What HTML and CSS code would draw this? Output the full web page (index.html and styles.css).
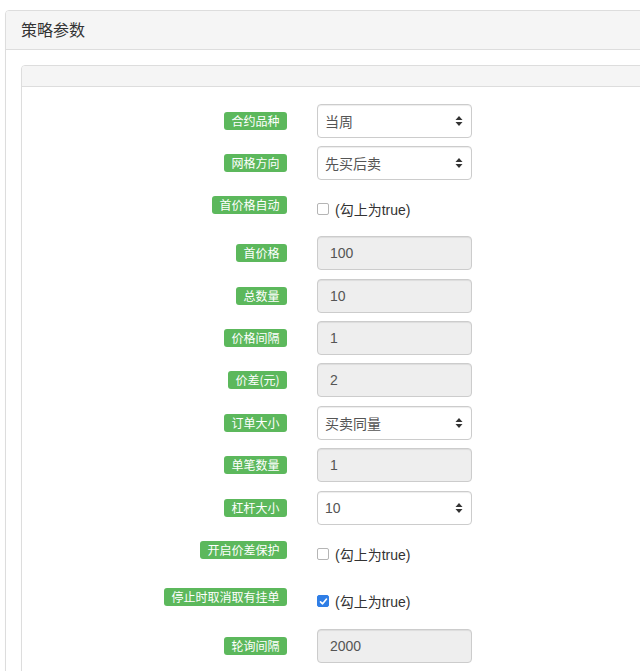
FILE: index.html
```html
<!DOCTYPE html>
<html lang="zh-CN">
<head>
<meta charset="utf-8">
<title>策略参数</title>
<link rel="stylesheet" href="styles.css">
</head>
<body>
<div class="panel outer">
  <div class="panel-heading"><h3 class="panel-title">策略参数</h3></div>
  <div class="panel-body">
    <div class="panel inner">
      <div class="panel-heading empty"></div>
      <div class="form">
        <div class="row"><span class="lbl">合约品种</span>
          <div class="ctl select"><span>当周</span><svg class="caret" width="8" height="12" viewBox="0 0 8 12"><path d="M4 1 L7.5 5 H0.5 Z M4 11 L7.5 7 H0.5 Z" fill="#333"/></svg></div></div>
        <div class="row"><span class="lbl">网格方向</span>
          <div class="ctl select"><span>先买后卖</span><svg class="caret" width="8" height="12" viewBox="0 0 8 12"><path d="M4 1 L7.5 5 H0.5 Z M4 11 L7.5 7 H0.5 Z" fill="#333"/></svg></div></div>
        <div class="row chk"><span class="lbl">首价格自动</span>
          <label class="check"><span class="box"></span><span>(勾上为true)</span></label></div>
        <div class="row"><span class="lbl">首价格</span><div class="ctl ro">100</div></div>
        <div class="row"><span class="lbl">总数量</span><div class="ctl ro">10</div></div>
        <div class="row"><span class="lbl">价格间隔</span><div class="ctl ro">1</div></div>
        <div class="row"><span class="lbl">价差(元)</span><div class="ctl ro">2</div></div>
        <div class="row"><span class="lbl">订单大小</span>
          <div class="ctl select"><span>买卖同量</span><svg class="caret" width="8" height="12" viewBox="0 0 8 12"><path d="M4 1 L7.5 5 H0.5 Z M4 11 L7.5 7 H0.5 Z" fill="#333"/></svg></div></div>
        <div class="row"><span class="lbl">单笔数量</span><div class="ctl ro">1</div></div>
        <div class="row"><span class="lbl">杠杆大小</span>
          <div class="ctl select"><span>10</span><svg class="caret" width="8" height="12" viewBox="0 0 8 12"><path d="M4 1 L7.5 5 H0.5 Z M4 11 L7.5 7 H0.5 Z" fill="#333"/></svg></div></div>
        <div class="row chk"><span class="lbl">开启价差保护</span>
          <label class="check"><span class="box"></span><span>(勾上为true)</span></label></div>
        <div class="row chk"><span class="lbl">停止时取消取有挂单</span>
          <label class="check"><span class="box on"><svg width="9" height="9" viewBox="0 0 9 9"><path d="M1.5 4.8 L3.6 6.8 L7.5 2" fill="none" stroke="#fff" stroke-width="1.6" stroke-linecap="round" stroke-linejoin="round"/></svg></span><span>(勾上为true)</span></label></div>
        <div class="row"><span class="lbl">轮询间隔</span><div class="ctl ro">2000</div></div>
      </div>
    </div>
  </div>
</div>
</body>
</html>
```

FILE: styles.css
```css
html, body {
  margin: 0;
  padding: 0;
  overflow: hidden;
  background: #fff;
}
body {
  font-family: "Liberation Sans", "Noto Sans CJK SC", sans-serif;
  font-size: 14px;
  color: #333;
  padding: 10px 0 0 5px;
}
.panel {
  background: #fff;
  border: 1px solid #ddd;
  border-radius: 4px;
  box-shadow: 0 1px 1px rgba(0,0,0,.05);
}
.outer {
  width: 720px;
  height: 760px;
}
.panel-heading {
  background: #f5f5f5;
  border-bottom: 1px solid #ddd;
  padding: 10px 15px;
  border-radius: 3px 3px 0 0;
}
.panel-title {
  margin: 0;
  font-size: 16px;
  line-height: 17.6px;
  font-weight: normal;
  color: #333;
  font-family: "Noto Sans CJK SC", sans-serif;
}
.panel-heading.empty {
  height: 0;
}
.panel-body {
  padding: 15px;
}
.inner {
  width: 700px;
  height: 700px;
}
.form {
  padding-top: 17px;
  display: grid;
  row-gap: 8.4px;
}
.row {
  display: grid;
  grid-template-columns: 265px 155px;
  column-gap: 30px;
  height: 34px;
  align-items: center;
}
.row.chk {
  height: 39.5px;
  align-items: start;
}
.lbl {
  justify-self: end;
  background: #5cb85c;
  color: #fff;
  font-family: "Noto Sans CJK SC", sans-serif;
  font-size: 12px;
  line-height: 12px;
  padding: 3px 7.5px;
  border-radius: 3px;
  white-space: nowrap;
}
.row.chk .lbl {
  margin-top: 7.5px;
}
.ctl {
  box-sizing: border-box;
  height: 34px;
  border: 1px solid #ccc;
  border-radius: 4px;
  box-shadow: inset 0 1px 1px rgba(0,0,0,.075);
  display: flex;
  align-items: center;
  color: #555;
  font-size: 14px;
}
.ro {
  background: #eee;
  padding-left: 12px;
}
.select {
  background: #fff;
  padding: 0 8px 0 7px;
  justify-content: space-between;
}
.select span {
  font-family: "Liberation Sans", "Noto Sans CJK SC", sans-serif;
}
.check {
  display: flex;
  align-items: center;
  gap: 6px;
  margin-top: 12px;
  height: 17px;
  color: #333;
  font-size: 14px;
}
.box {
  box-sizing: border-box;
  width: 12px;
  height: 12px;
  border: 1px solid #b5b5b5;
  border-radius: 2px;
  background: #fff;
  display: flex;
  align-items: center;
  justify-content: center;
}
.box.on {
  background: #2f7ee6;
  border-color: #2f7ee6;
}
```
